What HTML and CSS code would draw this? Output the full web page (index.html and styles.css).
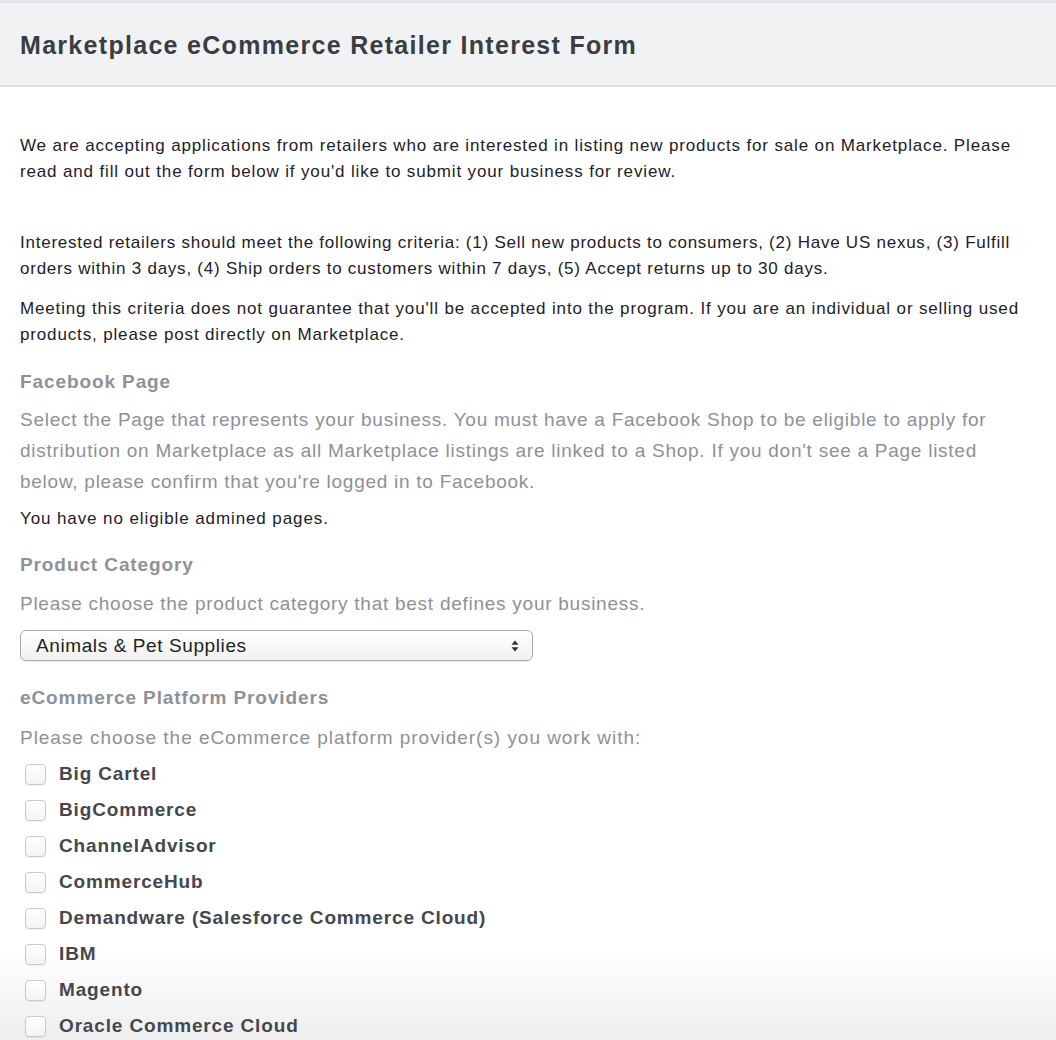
FILE: index.html
```html
<!DOCTYPE html>
<html lang="en">
<head>
<meta charset="utf-8">
<title>Marketplace eCommerce Retailer Interest Form</title>
<link rel="stylesheet" href="styles.css">
</head>
<body>
<header class="page-header">
  <h1 class="page-title">Marketplace eCommerce Retailer Interest Form</h1>
</header>
<main class="content">
  <p class="intro intro-first">We are accepting applications from retailers who are interested in listing new products for sale on Marketplace. Please read and fill out the form below if you'd like to submit your business for review.</p>
  <p class="intro intro-second">Interested retailers should meet the following criteria: (1) Sell new products to consumers, (2) Have US nexus, (3) Fulfill orders within 3 days, (4) Ship orders to customers within 7 days, (5) Accept returns up to 30 days.</p>
  <p class="intro intro-third">Meeting this criteria does not guarantee that you'll be accepted into the program. If you are an individual or selling used products, please post directly on Marketplace.</p>

  <section class="field field-page">
    <h2 class="field-label">Facebook Page</h2>
    <p class="field-help help-page">Select the Page that represents your business. You must have a Facebook Shop to be eligible to apply for distribution on Marketplace as all Marketplace listings are linked to a Shop. If you don't see a Page listed below, please confirm that you're logged in to Facebook.</p>
    <p class="field-note">You have no eligible admined pages.</p>
  </section>

  <section class="field field-category">
    <h2 class="field-label">Product Category</h2>
    <p class="field-help help-category">Please choose the product category that best defines your business.</p>
    <div class="select">
      <span class="select-value">Animals &amp; Pet Supplies</span>
      <svg class="select-arrows" width="8" height="12" viewBox="0 0 8 12"><path d="M4 0.5 L7.5 4.8 H0.5 Z M4 11.5 L7.5 7.2 H0.5 Z" fill="#333"/></svg>
    </div>
  </section>

  <section class="field field-platforms">
    <h2 class="field-label">eCommerce Platform Providers</h2>
    <p class="field-help help-platforms">Please choose the eCommerce platform provider(s) you work with:</p>
    <ul class="checklist">
      <li class="check-row"><span class="checkbox"></span><span class="check-label">Big Cartel</span></li>
      <li class="check-row"><span class="checkbox"></span><span class="check-label">BigCommerce</span></li>
      <li class="check-row"><span class="checkbox"></span><span class="check-label">ChannelAdvisor</span></li>
      <li class="check-row"><span class="checkbox"></span><span class="check-label">CommerceHub</span></li>
      <li class="check-row"><span class="checkbox"></span><span class="check-label">Demandware (Salesforce Commerce Cloud)</span></li>
      <li class="check-row"><span class="checkbox"></span><span class="check-label">IBM</span></li>
      <li class="check-row"><span class="checkbox"></span><span class="check-label">Magento</span></li>
      <li class="check-row"><span class="checkbox"></span><span class="check-label">Oracle Commerce Cloud</span></li>
    </ul>
  </section>
</main>
</body>
</html>
```

FILE: styles.css
```css
html {
  margin: 0;
  padding: 0;
  background: #ffffff;
}
body {
  margin: 0;
  padding: 0;
  font-family: "Liberation Sans", Arial, Helvetica, sans-serif;
  color: #1d2129;
  height: 1040px;
  overflow: hidden;
  background: linear-gradient(#ffffff, #eeeeef) no-repeat left bottom / 100% 90px;
}
.page-header {
  border-top: 3px solid #e3e4e7;
  border-bottom: 2px solid #dcdee1;
  background: #f1f2f4;
  height: 87px;
  box-sizing: border-box;
  display: flex;
  align-items: center;
  padding: 0 20px;
}
.page-title {
  margin: 0;
  padding-top: 2px;
  font-size: 25px;
  letter-spacing: 1.3px;
  font-weight: bold;
  color: #3a3d43;
}
.content {
  padding: 0 20px;
}
.intro {
  margin: 0;
  font-size: 17px;
  letter-spacing: 0.85px;
  line-height: 26px;
  color: #1d2129;
}
.intro-first { margin-top: 46px; }
.intro-second { margin-top: 45px; letter-spacing: 0.76px; }
.intro-third { margin-top: 14px; }

.field-page { margin-top: 22px; }
.field-category { margin-top: 23px; }
.field-platforms { margin-top: 25px; }

.field-label {
  margin: 0;
  font-size: 19px;
  letter-spacing: 0.9px;
  line-height: 24px;
  font-weight: bold;
  color: #8d9199;
}
.field-help {
  margin: 0;
  font-size: 19px;
  letter-spacing: 0.74px;
  line-height: 31px;
  color: #8d9199;
}
.help-page { margin-top: 10px; }
.help-category { margin-top: 11px; }
.help-platforms { margin-top: 12px; letter-spacing: 0.96px; }

.field-note {
  margin: 11px 0 0;
  font-size: 17px;
  letter-spacing: 0.9px;
  line-height: 22px;
  color: #1d2129;
}
.select {
  margin-top: 11px;
  width: 513px;
  height: 31px;
  box-sizing: border-box;
  border: 1px solid #a9abb0;
  border-radius: 6px;
  background: linear-gradient(#ffffff, #f1f1f1);
  box-shadow: 0 1px 1px rgba(0,0,0,0.08);
  display: flex;
  align-items: center;
  justify-content: space-between;
  padding: 0 13px 0 15px;
}
.select-value {
  font-size: 19px;
  letter-spacing: 0.6px;
  color: #222;
}
.select-arrows { display: block; }

.checklist {
  list-style: none;
  margin: 3px 0 0;
  padding: 0;
}
.check-row {
  height: 36px;
  display: flex;
  align-items: center;
}
.checkbox {
  width: 21px;
  height: 21px;
  margin-left: 5px;
  margin-right: 13px;
  box-sizing: border-box;
  border: 1px solid #c9cacd;
  border-radius: 4px;
  background: linear-gradient(#ffffff, #f3f3f3);
  box-shadow: 0 1px 1px rgba(0,0,0,0.06);
}
.check-label {
  font-size: 19px;
  letter-spacing: 0.85px;
  font-weight: bold;
  color: #44474d;
}
```
